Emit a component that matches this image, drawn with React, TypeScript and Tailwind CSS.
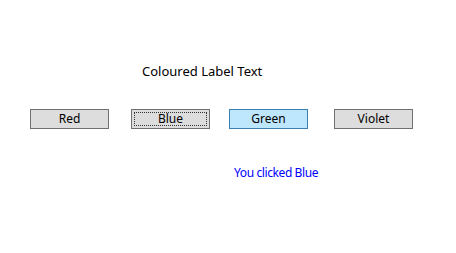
const buttons = [
  { label: "Red", ml: "ml-[30px]", style: "normal" },
  { label: "Blue", ml: "ml-[22px]", style: "focus" },
  { label: "Green", ml: "ml-[19px]", style: "hover" },
  { label: "Violet", ml: "ml-[26px]", style: "normal" },
];

const App = () => {
  return (
    <div className="w-[456px] h-[253px] bg-white text-[12px] leading-[16px] text-black font-['Noto_Sans','Liberation_Sans',sans-serif]">
      {/* Label */}
      <div className="pt-[63px] pl-[142px] text-[13px] leading-[17px]">Coloured Label Text</div>

      {/* Buttons */}
      <div className="flex mt-[29px]">
        {buttons.map((b) => (
          <div
            key={b.label}
            className={
              b.style === "hover"
                ? `${b.ml} w-[79px] h-[20px] border border-[#3c7fb1] bg-[#bee6fd] flex items-center justify-center`
                : `${b.ml} w-[79px] h-[20px] border border-[#707070] bg-[#dddddd] flex items-center justify-center relative`
            }
          >
            {b.style === "focus" && (
              <div className="absolute inset-[2px] border border-dotted border-[#333333]" />
            )}
            <span className="relative">{b.label}</span>
          </div>
        ))}
      </div>

      {/* Result */}
      <div className="mt-[36px] pl-[234px] tracking-[-0.4px] text-[#0000ff]">You clicked Blue</div>
    </div>
  );
};

export default App;
